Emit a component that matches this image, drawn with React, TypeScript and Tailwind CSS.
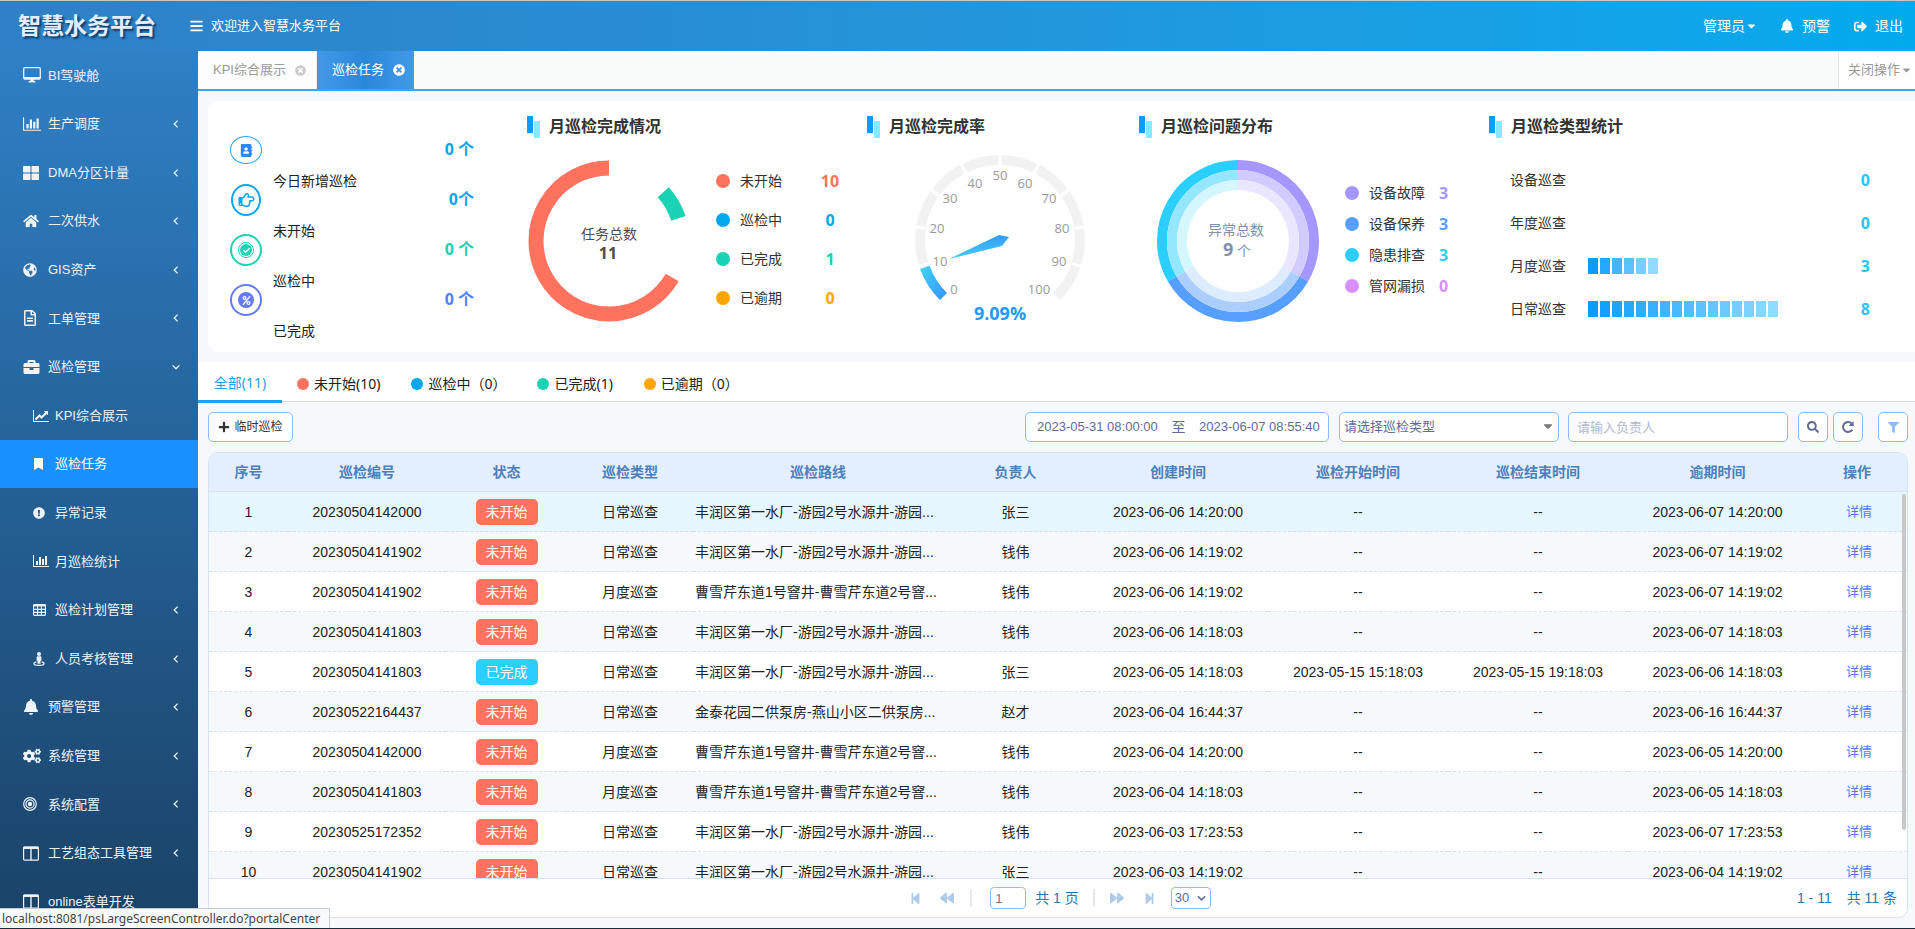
import { ReactNode } from "react";
import {
  FaAddressBook,
  FaBackward,
  FaBars,
  FaBell,
  FaBookmark,
  FaBriefcase,
  FaCaretDown,
  FaCheck,
  FaCogs,
  FaExclamationCircle,
  FaFilter,
  FaForward,
  FaGlobeAmericas,
  FaHome,
  FaPercent,
  FaPlus,
  FaRegFileAlt,
  FaRegHandPointRight,
  FaSearch,
  FaSignOutAlt,
  FaStepBackward,
  FaStepForward,
  FaThLarge,
  FaTimesCircle,
} from "react-icons/fa";

interface MenuItem {
  label: string;
  icon: ReactNode;
  arrow?: "left" | "down";
  sub?: boolean;
  active?: boolean;
}

interface Task {
  code: string;
  done?: boolean;
  type: string;
  route: string;
  owner: string;
  created: string;
  start?: string;
  end?: string;
  overdue: string;
}

function DesktopIcon() {
  return (
    <svg viewBox="0 0 18 16" className="w-[18px] h-4" fill="none" stroke="currentColor">
      <rect x=".7" y=".7" width="16.6" height="11.3" rx="1" strokeWidth="1.3" />
      <path d="M1 11h16" strokeWidth="2" />
      <path d="M7.2 12h3.6v2h1.6v1.4H5.6V14h1.6z" fill="currentColor" stroke="none" />
    </svg>
  );
}

function BarChartIcon({ className }: { className: string }) {
  return (
    <svg viewBox="0 0 2048 1792" className={className} fill="currentColor">
      <path d="M640 896v512h-256v-512h256zM1024 384v1024h-256v-1024h256zM2048 1536v128h-2048v-1536h128v1408h1920zM1408 640v768h-256v-768h256zM1792 256v1152h-256v-1152h256z" />
    </svg>
  );
}

function LineChartIcon() {
  return (
    <svg viewBox="0 0 2048 1792" className="w-4 h-[14px]" fill="currentColor">
      <path d="M2048 1536v128h-2048v-1536h128v1408h1920zM1920 288v435q0 21-19.5 29.5t-35.5-7.5l-121-121-633 633q-10 10-23 10t-23-10l-233-233-416 416-192-192 585-585q10-10 23-10t23 10l233 233 464-464-121-121q-16-16-7.5-35.5t29.5-19.5h435q14 0 23 9t9 23z" />
    </svg>
  );
}

function ColumnsIcon() {
  return (
    <svg viewBox="0 0 16 15" className="w-4 h-[15px]" fill="none" stroke="currentColor">
      <rect x=".6" y="1" width="14.8" height="13.2" rx="1" strokeWidth="1.2" />
      <path d="M.6 1.8h14.8" strokeWidth="2.4" />
      <path d="M8 1v13" strokeWidth="1.4" />
    </svg>
  );
}

function GridIcon() {
  return (
    <svg viewBox="0 0 13 12" className="w-[13px] h-3" fill="none" stroke="currentColor">
      <rect x=".6" y=".6" width="11.8" height="10.8" rx="1" strokeWidth="1.2" />
      <path d="M.6 1.4h11.8" strokeWidth="2" />
      <path d="M.6 5.4h11.8M.6 8.4h11.8M4.6 1v10.4M8.4 1v10.4" strokeWidth="1.1" />
    </svg>
  );
}

function PersonIcon() {
  return (
    <svg viewBox="0 0 12 14" className="w-3 h-[14px]" fill="currentColor">
      <circle cx="6" cy="2" r="2" />
      <path d="M4.2 4.3h3.6l.6.6v3.5l-.9.5v2.9h-3V8.9l-.9-.5V4.9z" />
      <path d="M3.4 9.9C1.8 10.200.9 10.800.9 11.500c0 1.100 2.300 1.900 5.100 1.900s5.100-.8 5.100-1.900c0-.7-.9-1.300-2.500-1.600" fill="none" stroke="currentColor" strokeWidth="1.2" />
    </svg>
  );
}

function TargetIcon() {
  return (
    <svg viewBox="0 0 14 14" className="w-[14px] h-[14px]" fill="none" stroke="currentColor" strokeWidth="1.2">
      <circle cx="7" cy="7" r="6.3" />
      <circle cx="7" cy="7" r="4.1" />
      <circle cx="7" cy="7" r="2.2" fill="currentColor" stroke="none" />
    </svg>
  );
}

function RefreshIcon() {
  return (
    <svg viewBox="0 0 14 14" className="w-[14px] h-[14px]" fill="none" stroke="currentColor" strokeWidth="2">
      <path d="M11.3 9.6A5 5 0 1 1 10.6 3.4" />
      <path d="M12.6 1v5H7.6z" fill="currentColor" stroke="none" />
    </svg>
  );
}

function Arrow({ dir }: { dir: "left" | "down" }) {
  return (
    <svg viewBox="0 0 8 8" className="w-2 h-2 shrink-0" fill="none" stroke="currentColor" strokeWidth="1.3">
      <path d={dir === "left" ? "M5.6.6 2.2 4l3.4 3.4" : "M.6 2.4 4 5.8l3.4-3.4"} />
    </svg>
  );
}

const menu: MenuItem[] = [
  { label: "BI驾驶舱", icon: <DesktopIcon /> },
  { label: "生产调度", icon: <BarChartIcon className="w-[18px] h-4" />, arrow: "left" },
  { label: "DMA分区计量", icon: <FaThLarge className="w-4 h-4" />, arrow: "left" },
  { label: "二次供水", icon: <FaHome className="w-4 h-[14px]" />, arrow: "left" },
  { label: "GIS资产", icon: <FaGlobeAmericas className="w-[14px] h-[14px]" />, arrow: "left" },
  { label: "工单管理", icon: <FaRegFileAlt className="w-[14px] h-4" />, arrow: "left" },
  { label: "巡检管理", icon: <FaBriefcase className="w-[17px] h-4" />, arrow: "down" },
  { label: "KPI综合展示", icon: <LineChartIcon />, sub: true },
  { label: "巡检任务", icon: <FaBookmark className="w-[11px] h-3" />, sub: true, active: true },
  { label: "异常记录", icon: <FaExclamationCircle className="w-3 h-3" />, sub: true },
  { label: "月巡检统计", icon: <BarChartIcon className="w-4 h-[14px]" />, sub: true },
  { label: "巡检计划管理", icon: <GridIcon />, sub: true, arrow: "left" },
  { label: "人员考核管理", icon: <PersonIcon />, sub: true, arrow: "left" },
  { label: "预警管理", icon: <FaBell className="w-4 h-4" />, arrow: "left" },
  { label: "系统管理", icon: <FaCogs className="w-[18px] h-4" />, arrow: "left" },
  { label: "系统配置", icon: <TargetIcon />, arrow: "left" },
  { label: "工艺组态工具管理", icon: <ColumnsIcon />, arrow: "left" },
  { label: "online表单开发", icon: <ColumnsIcon /> },
];

const stats = [
  { label: "今日新增巡检", value: "0 个", color: "text-[#0aa5ea]", icon: <FaAddressBook className="w-[13px] h-[13px] text-[#2a86ff]" />, ring: "w-8 h-7 border border-[#2fa4f5]" },
  { label: "未开始", value: "0个", color: "text-[#0aa5ea]", icon: <FaRegHandPointRight className="w-[17px] h-4" />, ring: "w-[30px] h-8 border-2 border-[#0aa5ea]" },
  { label: "巡检中", value: "0 个", color: "text-[#1ad2b4]", icon: <CheckDot />, ring: "w-8 h-8 border-2 border-[#1ad2b4]" },
  { label: "已完成", value: "0 个", color: "text-[#5082f5]", icon: <PercentDot />, ring: "w-8 h-8 border-2 border-[#637bf7]" },
];

const finish = [
  { label: "未开始", value: 10, dot: "bg-[#ff725e]", color: "text-[#ff725e]" },
  { label: "巡检中", value: 0, dot: "bg-[#02a7ec]", color: "text-[#02a7ec]" },
  { label: "已完成", value: 1, dot: "bg-[#1ad2b4]", color: "text-[#1ad2b4]" },
  { label: "已逾期", value: 0, dot: "bg-[#ffa502]", color: "text-[#ffa502]" },
];

const problems = [
  { label: "设备故障", value: 3, dot: "bg-[#a497ff]", color: "text-[#a497ff]" },
  { label: "设备保养", value: 3, dot: "bg-[#569fff]", color: "text-[#569fff]" },
  { label: "隐患排查", value: 3, dot: "bg-[#2acfff]", color: "text-[#2acfff]" },
  { label: "管网漏损", value: 0, dot: "bg-[#d98fff]", color: "text-[#d98fff]" },
];

const kinds = [
  { label: "设备巡查", value: 0, blocks: 0 },
  { label: "年度巡查", value: 0, blocks: 0 },
  { label: "月度巡查", value: 3, blocks: 6 },
  { label: "日常巡查", value: 8, blocks: 16 },
];

const filters = [
  { label: "未开始(10)", dot: "bg-[#ff725e]" },
  { label: "巡检中（0）", dot: "bg-[#02a7ec]" },
  { label: "已完成(1)", dot: "bg-[#1ad2b4]" },
  { label: "已逾期（0）", dot: "bg-[#ffa502]" },
];

const plant = "丰润区第一水厂-游园2号水源井-游园...";
const well = "曹雪芹东道1号窨井-曹雪芹东道2号窨...";
const pump = "金泰花园二供泵房-燕山小区二供泵房...";

const tasks: Task[] = [
  { code: "20230504142000", type: "日常巡查", route: plant, owner: "张三", created: "2023-06-06 14:20:00", overdue: "2023-06-07 14:20:00" },
  { code: "20230504141902", type: "日常巡查", route: plant, owner: "钱伟", created: "2023-06-06 14:19:02", overdue: "2023-06-07 14:19:02" },
  { code: "20230504141902", type: "月度巡查", route: well, owner: "钱伟", created: "2023-06-06 14:19:02", overdue: "2023-06-07 14:19:02" },
  { code: "20230504141803", type: "日常巡查", route: plant, owner: "钱伟", created: "2023-06-06 14:18:03", overdue: "2023-06-07 14:18:03" },
  { code: "20230504141803", done: true, type: "日常巡查", route: plant, owner: "张三", created: "2023-06-05 14:18:03", start: "2023-05-15 15:18:03", end: "2023-05-15 19:18:03", overdue: "2023-06-06 14:18:03" },
  { code: "20230522164437", type: "日常巡查", route: pump, owner: "赵才", created: "2023-06-04 16:44:37", overdue: "2023-06-16 16:44:37" },
  { code: "20230504142000", type: "月度巡查", route: well, owner: "钱伟", created: "2023-06-04 14:20:00", overdue: "2023-06-05 14:20:00" },
  { code: "20230504141803", type: "月度巡查", route: well, owner: "钱伟", created: "2023-06-04 14:18:03", overdue: "2023-06-05 14:18:03" },
  { code: "20230525172352", type: "日常巡查", route: plant, owner: "钱伟", created: "2023-06-03 17:23:53", overdue: "2023-06-07 17:23:53" },
  { code: "20230504141902", type: "日常巡查", route: plant, owner: "张三", created: "2023-06-03 14:19:02", overdue: "2023-06-04 14:19:02" },
];

const columns = [
  { label: "序号", width: "w-[79px]" },
  { label: "巡检编号", width: "w-[158px]" },
  { label: "状态", width: "w-[121px]" },
  { label: "巡检类型", width: "w-[126px]" },
  { label: "巡检路线", width: "w-[250px]" },
  { label: "负责人", width: "w-[145px]" },
  { label: "创建时间", width: "w-[180px]" },
  { label: "巡检开始时间", width: "w-[180px]" },
  { label: "巡检结束时间", width: "w-[180px]" },
  { label: "逾期时间", width: "w-[179px]" },
  { label: "操作", width: "w-[100px]" },
];

function CheckDot() {
  return (
    <span className="flex items-center justify-center w-4 h-4 rounded-full border border-[#1ad2b4] p-px">
      <span className="flex items-center justify-center w-3 h-3 rounded-full bg-[#1ad2b4] text-white">
        <FaCheck className="w-[7px] h-[7px]" />
      </span>
    </span>
  );
}

function PercentDot() {
  return (
    <span className="flex items-center justify-center w-4 h-4 rounded-full bg-[#637bf7] text-white">
      <FaPercent className="w-[9px] h-[9px]" />
    </span>
  );
}

// 0deg is at the top, clockwise
function point(cx: number, cy: number, r: number, deg: number) {
  const a = (deg * Math.PI) / 180;
  return `${(cx + r * Math.sin(a)).toFixed(2)} ${(cy - r * Math.cos(a)).toFixed(2)}`;
}

function arc(cx: number, cy: number, r: number, from: number, to: number) {
  const large = to - from > 180 ? 1 : 0;
  return `M${point(cx, cy, r, from)}A${r} ${r} 0 ${large} 1 ${point(cx, cy, r, to)}`;
}

function PanelTitle({ children }: { children: ReactNode }) {
  return (
    <div className="flex gap-[9px] h-[22px]">
      <div className="flex gap-px">
        <span className="w-[6px] h-[17px] bg-[#0a9cff]" />
        <span className="w-[6px] h-[17px] mt-[5px] bg-[#86e9ff]" />
      </div>
      <h3 className="text-base leading-[22px] font-bold text-[#333] whitespace-nowrap">{children}</h3>
    </div>
  );
}

function FinishChart() {
  return (
    <svg viewBox="0 0 164 164" className="w-[164px] h-[164px] shrink-0" fill="none" strokeWidth="15">
      <path d={arc(82, 82, 73, 120, 360)} stroke="#ff725e" />
      <path d={arc(82, 82, 73, 48, 72)} stroke="#1ad2b4" />
      <g stroke="none" fill="#4d4d4d" textAnchor="middle">
        <text x="82" y="80" fontSize="14">任务总数</text>
        <text x="81" y="100" fontSize="16" fontWeight="bold" className="font-['Open_Sans',sans-serif]">11</text>
      </g>
    </svg>
  );
}

const scale = [
  [43, 139, "0"], [29, 111, "10"], [26, 78, "20"], [39, 48, "30"], [64, 33, "40"], [89, 25, "50"],
  [114, 33, "60"], [138, 48, "70"], [151, 78, "80"], [148, 111, "90"], [128, 139, "100"],
] as const;

function RateGauge() {
  return (
    <svg viewBox="0 0 178 178" className="w-[178px] h-[178px]" fill="none">
      <defs>
        <linearGradient id="rate" x1="0" y1="0" x2="1" y2="1">
          <stop offset="0" stopColor="#41cdfb" />
          <stop offset="1" stopColor="#349af8" />
        </linearGradient>
        <linearGradient id="needle" x1="0" y1="0" x2="0" y2="1">
          <stop offset="0" stopColor="#349af8" />
          <stop offset="1" stopColor="#41cdfb" />
        </linearGradient>
      </defs>
      <path d={arc(89, 89, 80, 225, 495)} stroke="#f2f2f2" strokeWidth="10" />
      <path d={arc(89, 89, 80, 225, 250)} stroke="url(#rate)" strokeWidth="10" />
      {[1, 2, 3, 4, 5, 6, 7, 8, 9].map((n) => (
        <path
          key={n}
          d={`M${point(89, 89, 74, 225 + n * 27)}L${point(89, 89, 86, 225 + n * 27)}`}
          stroke="#fff"
          strokeWidth="3"
        />
      ))}
      <path d="M38 108 88 84 98 86 91 95z" fill="url(#needle)" />
      <g fill="#999" fontSize="13" textAnchor="middle" className="font-['Open_Sans',sans-serif]">
        {scale.map(([x, y, t]) => (
          <text key={t} x={x} y={y + 4}>{t}</text>
        ))}
        <text x="89" y="169" fontSize="18" fontWeight="bold" fill="#2399fb">9.09%</text>
      </g>
    </svg>
  );
}

function ProblemChart() {
  const parts = [
    { from: 0, colors: ["#a497ff", "#d1cbff", "#ebe6ff"] },
    { from: 120, colors: ["#569fff", "#aacfff", "#ddecff"] },
    { from: 240, colors: ["#2acfff", "#95e7ff", "#d4f6ff"] },
  ];
  return (
    <svg viewBox="0 0 164 164" className="w-[164px] h-[164px] shrink-0" fill="none" strokeWidth="10">
      {parts.map((p) =>
        p.colors.map((c, i) => (
          <path key={c} d={arc(82, 82, 76 - i * 10, p.from, p.from + 120)} stroke={c} />
        ))
      )}
      <g stroke="none" fill="#7f90aa" textAnchor="middle" fontSize="14">
        <text x="80" y="76">异常总数</text>
        <text x="81" y="97">
          <tspan fontSize="18" fontWeight="bold" className="font-['Open_Sans',sans-serif]">9</tspan> 个
        </text>
      </g>
    </svg>
  );
}

function Sidebar() {
  return (
    <nav className="w-[198px] shrink-0 flex flex-col pb-[2px] text-[13px] text-[#edf3f9] bg-gradient-to-b from-[#2f80c6] to-[#1a4267]">
      {menu.map((item) => (
        <a
          key={item.label}
          href="#"
          className={`flex-1 flex items-center pr-[18px] whitespace-nowrap ${item.sub ? "pl-[33px]" : "pl-[23px]"} ${item.active ? "bg-[#1890ff] text-white" : ""}`}
        >
          <span className={`flex items-center ${item.sub ? "w-[22px]" : "w-[25px]"}`}>{item.icon}</span>
          <span className="flex-1">{item.label}</span>
          {item.arrow && <Arrow dir={item.arrow} />}
        </a>
      ))}
    </nav>
  );
}

function Header() {
  return (
    <header className="h-[50px] shrink-0 flex items-center text-white bg-gradient-to-r from-[#2f80c6] to-[#01aaee]">
      <h1 className="w-[190px] pl-[18px] text-[23px] font-bold text-[#e3edff] whitespace-nowrap [text-shadow:2px_2px_2px_#123a66]">
        智慧水务平台
      </h1>
      <button type="button" aria-label="菜单">
        <FaBars className="w-[13px] h-[14px]" />
      </button>
      <span className="ml-2 text-[13px]">欢迎进入智慧水务平台</span>
      <div className="ml-auto pr-3 flex items-center text-sm">
        <button type="button" className="flex items-center gap-[2px]">
          管理员 <FaCaretDown className="w-[9px] h-3" />
        </button>
        <a href="#" className="ml-6 flex items-center gap-2">
          <FaBell className="w-[14px] h-[14px]" /> 预警
        </a>
        <a href="#" className="ml-6 flex items-center gap-2">
          <FaSignOutAlt className="w-[13px] h-[13px]" /> 退出
        </a>
      </div>
    </header>
  );
}

function PageTabs() {
  return (
    <div className="h-10 shrink-0 flex text-[13px] text-[#999] bg-[#f9fbfa] border-b-2 border-[#37a6f4]">
      <button type="button" className="w-[119px] pl-[15px] flex items-center gap-[9px] bg-[#fdfdfd] border-r border-[#eee] whitespace-nowrap">
        KPI综合展示 <FaTimesCircle className="w-[11px] h-[11px] text-[#ccc]" />
      </button>
      <button type="button" className="w-[97px] pl-[15px] flex items-center gap-[9px] text-white whitespace-nowrap bg-gradient-to-r from-[#4399e8] via-[#2a88da] to-[#4399e8]">
        巡检任务 <FaTimesCircle className="w-[12px] h-[12px]" />
      </button>
      <button type="button" className="ml-auto w-[77px] pl-[9px] flex items-center gap-[2px] bg-white border-l border-[#e4e7ea] whitespace-nowrap">
        关闭操作 <FaCaretDown className="w-[9px] h-3" />
      </button>
    </div>
  );
}

function Summary() {
  return (
    <section className="mt-[10px] ml-[10px] h-[251px] shrink-0 grid grid-cols-[319fr_340fr_272fr_350fr_426fr] bg-white rounded-l-[10px]">
      <div className="flex pl-[22px]">
        <ul className="w-8 pt-6">
          {stats.map((s) => (
            <li key={s.label} className={`h-[50px] flex items-center justify-center ${s.color}`}>
              <span className={`flex items-center justify-center rounded-[50%] ${s.ring}`}>{s.icon}</span>
            </li>
          ))}
        </ul>
        <ul className="pl-[11px] pt-[55px] text-sm text-[#222]">
          {stats.map((s) => (
            <li key={s.label} className="h-[50px] flex items-center whitespace-nowrap">{s.label}</li>
          ))}
        </ul>
        <ul className="ml-auto pr-[53px] pt-[23px] text-base font-bold text-right font-['Open_Sans','Noto_Sans_CJK_SC',sans-serif]">
          {stats.map((s) => (
            <li key={s.label} className={`h-[50px] leading-[50px] whitespace-nowrap ${s.color}`}>{s.value}</li>
          ))}
        </ul>
      </div>

      <div className="pt-[15px]">
        <PanelTitle>月巡检完成情况</PanelTitle>
        <div className="mt-[21px] flex">
          <FinishChart />
          <ul className="ml-[25px] pt-[2px]">
            {finish.map((f) => (
              <li key={f.label} className="h-[39px] flex items-center">
                <span className={`w-[14px] h-[14px] rounded-full ${f.dot}`} />
                <span className="ml-[10px] w-[70px] text-sm text-[#333]">{f.label}</span>
                <b className={`w-10 text-center text-base font-['Open_Sans',sans-serif] ${f.color}`}>{f.value}</b>
              </li>
            ))}
          </ul>
        </div>
      </div>

      <div className="pt-[15px]">
        <PanelTitle>月巡检完成率</PanelTitle>
        <div className="mt-[13px] pl-11">
          <RateGauge />
        </div>
      </div>

      <div className="pt-[15px]">
        <PanelTitle>月巡检问题分布</PanelTitle>
        <div className="mt-[21px] pl-[17px] flex">
          <ProblemChart />
          <ul className="ml-[25px] pt-[18px]">
            {problems.map((p) => (
              <li key={p.label} className="h-[31px] flex items-center">
                <span className={`w-[14px] h-[14px] rounded-full ${p.dot}`} />
                <span className="ml-[10px] w-[70px] text-sm text-[#333]">{p.label}</span>
                <b className={`text-base font-['Open_Sans',sans-serif] ${p.color}`}>{p.value}</b>
              </li>
            ))}
          </ul>
        </div>
      </div>

      <div className="pt-[15px]">
        <PanelTitle>月巡检类型统计</PanelTitle>
        <ul className="mt-5 pl-[21px] pr-[45px]">
          {kinds.map((k) => (
            <li key={k.label} className="h-[43px] flex items-center">
              <span className="w-[78px] text-sm text-[#333]">{k.label}</span>
              <span className="flex gap-[2px]">
                {Array.from({ length: k.blocks }, (_, i) => (
                  <i
                    key={i}
                    className="w-[10px] h-4"
                    style={{ backgroundColor: `color-mix(in srgb, #8edcff ${(i * 100) / (k.blocks - 1)}%, #0a9cff)` }}
                  />
                ))}
              </span>
              <b className="ml-auto text-base text-[#2cc3ff] font-['Open_Sans',sans-serif]">{k.value}</b>
            </li>
          ))}
        </ul>
      </div>
    </section>
  );
}

function FilterTabs() {
  return (
    <div className="mt-[10px] h-10 shrink-0 flex text-sm text-[#222] bg-white border-b border-[#d9dce1] font-['Noto_Sans','Noto_Sans_CJK_SC',sans-serif]">
      <button type="button" className="w-[84px] h-[41px] pt-1 text-[#1e9fe8] border-b-3 border-[#1e9fe8]">
        全部(11)
      </button>
      {filters.map((f) => (
        <button key={f.label} type="button" className="pl-[15px] pr-4 pt-1 flex items-center gap-[5px] whitespace-nowrap">
          <span className={`w-3 h-3 rounded-full ${f.dot}`} />
          {f.label}
        </button>
      ))}
    </div>
  );
}

function Toolbar() {
  return (
    <div className="my-[10px] pl-[10px] pr-[7px] h-[30px] shrink-0 flex items-center text-[13px] text-[#5f6a98]">
      <button type="button" className="w-[85px] h-[30px] flex items-center justify-center gap-1 text-xs text-[#333] bg-white border border-[#8ebbfd] rounded-[5px]">
        <FaPlus className="w-3 h-3" /> 临时巡检
      </button>
      <div className="ml-auto w-[304px] h-[30px] pl-[11px] pr-2 flex items-center justify-between bg-white border border-[#8ebbfd] rounded-[5px]">
        <input aria-label="开始日期" defaultValue="2023-05-31 08:00:00" className="w-[121px] outline-none" />
        <span className="text-sm">至</span>
        <input aria-label="结束日期" defaultValue="2023-06-07 08:55:40" className="w-[121px] outline-none" />
      </div>
      <div className="relative ml-[10px]">
        <select aria-label="巡检类型" className="w-[220px] h-[30px] pl-1 appearance-none bg-white border border-[#8ebbfd] rounded-[5px]">
          <option>请选择巡检类型</option>
        </select>
        <FaCaretDown className="absolute right-[6px] top-[7px] w-[10px] h-[14px] text-[#777] pointer-events-none" />
      </div>
      <input
        aria-label="负责人"
        placeholder="请输入负责人"
        className="ml-[9px] w-[220px] h-[30px] pl-2 bg-white border border-[#8ebbfd] rounded-[5px] placeholder:text-[#b0b6ce]"
      />
      <button type="button" aria-label="搜索" className="ml-[10px] w-[30px] h-[30px] flex items-center justify-center bg-white border border-[#8ebbfd] rounded-[5px]">
        <FaSearch className="w-3 h-3" />
      </button>
      <button type="button" aria-label="刷新" className="ml-[5px] w-[30px] h-[30px] flex items-center justify-center bg-white border border-[#8ebbfd] rounded-[5px]">
        <RefreshIcon />
      </button>
      <button type="button" aria-label="筛选" className="ml-[15px] w-[30px] h-[30px] flex items-center justify-center text-[#8ebbfd] bg-white border border-[#8ebbfd] rounded-[5px]">
        <FaFilter className="w-[11px] h-[11px]" />
      </button>
    </div>
  );
}

function TaskTable() {
  return (
    <div className="relative flex-1 min-h-0 overflow-hidden">
      <table className="w-full table-fixed border-separate border-spacing-0 text-sm text-center text-[#222] whitespace-nowrap">
        <thead>
          <tr className="h-[39px] bg-[#e3effe] text-[#4c80bc]">
            {columns.map((c) => (
              <th key={c.label} className={`p-0 font-bold border-b border-[#d6e3f5] ${c.width}`}>{c.label}</th>
            ))}
          </tr>
        </thead>
        <tbody className="[&_td]:p-0 [&_td]:border-b [&_td]:border-dashed [&_td]:border-[#dcdfe3]">
          {tasks.map((t, i) => (
            <tr key={i} className={`h-10 ${i === 0 ? "bg-[#e5f6fe]" : i % 2 ? "bg-[#f5f9fb]" : "bg-white"}`}>
              <td>{i + 1}</td>
              <td>{t.code}</td>
              <td>
                <span className={`inline-block w-[62px] h-[26px] leading-[26px] align-middle text-white rounded-[5px] ${t.done ? "bg-[#2acfff]" : "bg-[#ff725e]"}`}>
                  {t.done ? "已完成" : "未开始"}
                </span>
              </td>
              <td>{t.type}</td>
              <td className="text-left">
                <span className="pl-[2px]">{t.route}</span>
              </td>
              <td>{t.owner}</td>
              <td>{t.created}</td>
              <td>{t.start ?? "--"}</td>
              <td>{t.end ?? "--"}</td>
              <td>{t.overdue}</td>
              <td>
                <a href="#" className="pl-1 text-[13px] text-[#4d7cfe]">详情</a>
              </td>
            </tr>
          ))}
        </tbody>
      </table>
      <span className="absolute right-px top-[41px] bottom-12 w-1 rounded-full bg-[#c8c8c8]" />
    </div>
  );
}

function Pagination() {
  return (
    <div className="h-[39px] shrink-0 pr-[10px] grid grid-cols-[1fr_auto_1fr] items-center text-sm text-[#2a76b0] border-t border-[#d6e3f5]">
      <div className="col-start-2 ml-[15px] flex items-center text-[#aecce8]">
        <button type="button" aria-label="首页"><FaStepBackward className="w-[11px] h-[13px]" /></button>
        <button type="button" aria-label="上一页" className="ml-[19px]"><FaBackward className="w-[14px] h-[14px]" /></button>
        <span className="ml-4 w-[2px] h-[18px] bg-[#e6e8ea]" />
        <input aria-label="页码" defaultValue="1" className="ml-[18px] w-9 h-[22px] pl-1 text-[13px] text-[#6c7696] border border-[#8ebbfd] rounded-[4px]" />
        <span className="ml-[9px] text-[#2a76b0]">共 1 页</span>
        <span className="ml-[14px] w-[2px] h-[18px] bg-[#e6e8ea]" />
        <button type="button" aria-label="下一页" className="ml-[15px]"><FaForward className="w-[14px] h-[14px]" /></button>
        <button type="button" aria-label="末页" className="ml-5"><FaStepForward className="w-[11px] h-[13px]" /></button>
        <span className="relative ml-4 flex items-center text-[#5f6a98]">
          <select aria-label="每页条数" className="w-10 h-[22px] pl-[3px] appearance-none text-[13px] bg-white border border-[#8ebbfd] rounded-[4px]">
            <option>30</option>
          </select>
          <svg viewBox="0 0 10 6" className="absolute right-[5px] w-[9px] h-[6px] pointer-events-none" fill="none" stroke="currentColor" strokeWidth="1.8">
            <path d="M1 1l4 4 4-4" />
          </svg>
        </span>
      </div>
      <div className="flex justify-end gap-[15px]">
        <span>1 - 11</span>
        <span>共 11 条</span>
      </div>
    </div>
  );
}

export default function App() {
  return (
    <div className="relative h-screen flex flex-col border-t border-[#c4c8cb] border-b border-b-[#1b2a3d] bg-[#f5f9fb] overflow-hidden font-['Liberation_Sans','Noto_Sans_CJK_SC',sans-serif]">
      <Header />
      <div className="flex-1 min-h-0 flex">
        <Sidebar />
        <main className="flex-1 min-w-0 flex flex-col">
          <PageTabs />
          <Summary />
          <FilterTabs />
          <Toolbar />
          <div className="flex-1 min-h-0 ml-[10px] mr-[7px] mb-[10px] flex flex-col bg-white border border-[#d6e3f5] rounded-[10px] overflow-hidden">
            <TaskTable />
            <Pagination />
          </div>
        </main>
      </div>
      {/* Link target shown over the page corner */}
      <div className="absolute left-0 bottom-0 h-5 pl-[2px] pr-[9px] text-xs leading-5 text-[#444] bg-[#f7fafb] border-t border-r border-[#c8ccd0] font-['Noto_Sans',sans-serif]">
        localhost:8081/psLargeScreenController.do?portalCenter
      </div>
    </div>
  );
}
